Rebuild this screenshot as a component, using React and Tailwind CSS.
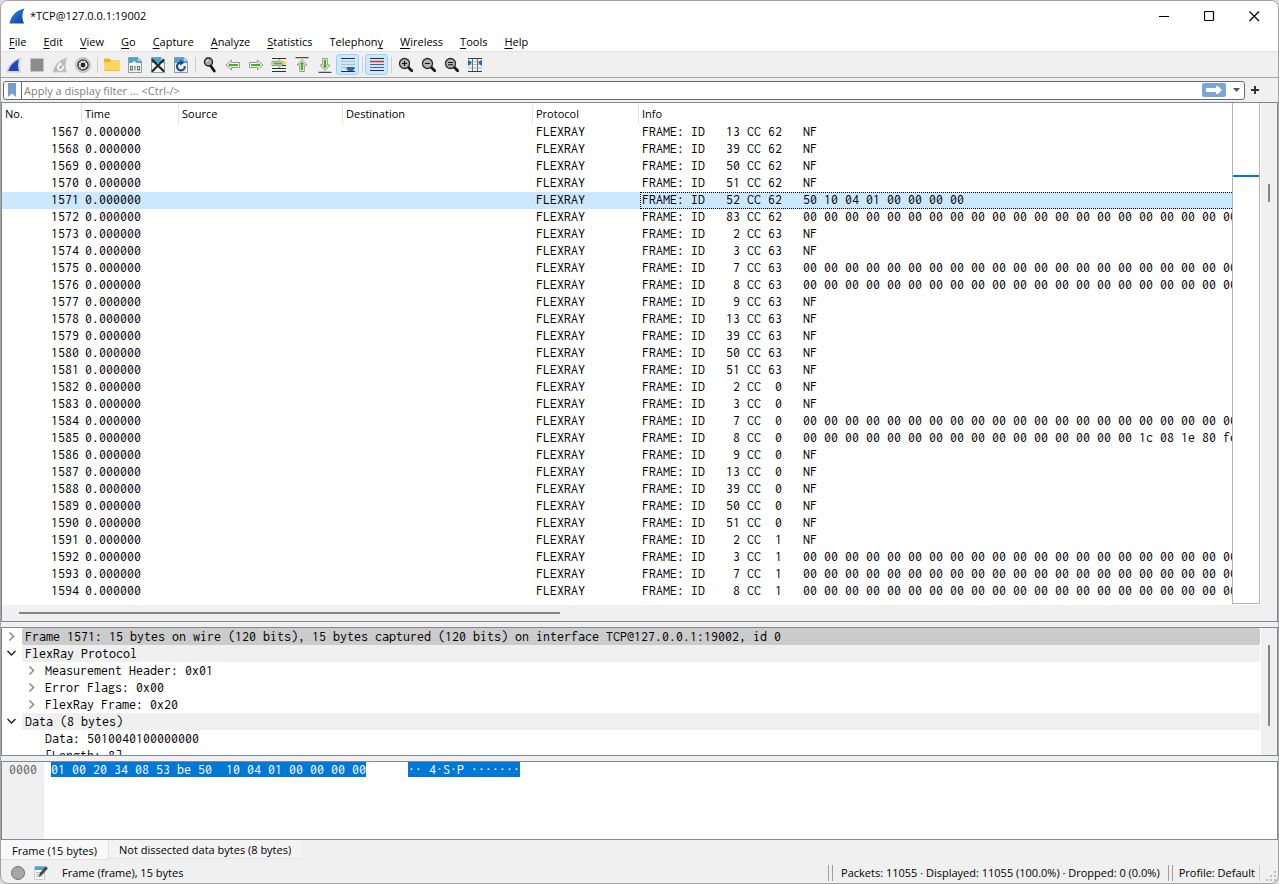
const ZEROS = Array(21).fill("00").join(" ");
const MIXED = Array(16).fill("00").join(" ") + " 1c 08 1e 80 fe";

const PACKETS = [
  [1567, 13, 62, "NF"],
  [1568, 39, 62, "NF"],
  [1569, 50, 62, "NF"],
  [1570, 51, 62, "NF"],
  [1571, 52, 62, "50 10 04 01 00 00 00 00"],
  [1572, 83, 62, ZEROS],
  [1573, 2, 63, "NF"],
  [1574, 3, 63, "NF"],
  [1575, 7, 63, ZEROS],
  [1576, 8, 63, ZEROS],
  [1577, 9, 63, "NF"],
  [1578, 13, 63, "NF"],
  [1579, 39, 63, "NF"],
  [1580, 50, 63, "NF"],
  [1581, 51, 63, "NF"],
  [1582, 2, 0, "NF"],
  [1583, 3, 0, "NF"],
  [1584, 7, 0, ZEROS],
  [1585, 8, 0, MIXED],
  [1586, 9, 0, "NF"],
  [1587, 13, 0, "NF"],
  [1588, 39, 0, "NF"],
  [1589, 50, 0, "NF"],
  [1590, 51, 0, "NF"],
  [1591, 2, 1, "NF"],
  [1592, 3, 1, ZEROS],
  [1593, 7, 1, ZEROS],
  [1594, 8, 1, ZEROS],
];

const SELECTED = 1571;

const MENUS = [
  ["", "F", "ile"],
  ["", "E", "dit"],
  ["", "V", "iew"],
  ["", "G", "o"],
  ["", "C", "apture"],
  ["", "A", "nalyze"],
  ["", "S", "tatistics"],
  ["Telephon", "y", ""],
  ["", "W", "ireless"],
  ["", "T", "ools"],
  ["", "H", "elp"],
];

const MONO = "font-['Inconsolata','Noto_Sans_Mono_CJK_JP',monospace] text-[14px] whitespace-pre";

function Svg({ children, className = "size-4" }) {
  return (
    <svg viewBox="0 0 16 16" className={className} aria-hidden="true">
      {children}
    </svg>
  );
}

function Fin({ from, to, id, className }) {
  return (
    <Svg className={className}>
      <defs>
        <linearGradient id={id} x1="0" y1="0" x2="1" y2="1">
          <stop offset="0" stopColor={from} />
          <stop offset="1" stopColor={to} />
        </linearGradient>
      </defs>
      <path d="M0.5 15.5C2 8.5 6 2.5 15.5 0.5C12.8 5 12.8 10.500 15 15.500Z" fill={`url(#${id})`} />
    </Svg>
  );
}

function StartIcon() {
  return (
    <Svg>
      <path d="M1 15C2.500 9 6 3 15 1C12.800 5 12.800 10.500 14.500 15Z" fill="#d9dbe2" stroke="#c2c4cc" strokeWidth="0.800" />
      <path d="M2.300 14C4 9 7.500 4.500 13 2.600C11.700 6 11.700 10 13 14Z" fill="#2444bd" />
    </Svg>
  );
}

function StopIcon() {
  return (
    <Svg>
      <rect x="1.500" y="1.500" width="13" height="13" fill="#8c8c8c" stroke="#c4c4c4" />
    </Svg>
  );
}

function RestartIcon() {
  return (
    <Svg>
      <path d="M1 15C2.500 9 6 3 15 1C12.800 5 12.800 10.500 14.500 15Z" fill="#b9b9b9" stroke="#cfcfcf" />
      <path d="M10.800 8.800a2.700 2.700 0 1 1-3-1.200" fill="none" stroke="#fff" strokeWidth="1.600" />
      <path d="M7 5.200l3.300 1.700L7.600 9.600z" fill="#fff" />
    </Svg>
  );
}

function OptionsIcon() {
  return (
    <Svg>
      <circle cx="8" cy="8" r="7.300" fill="#e4e4e4" stroke="#9a9a9a" strokeWidth="0.800" />
      <circle cx="8" cy="8" r="5.800" fill="#2c2c2c" />
      <circle cx="8" cy="8" r="3.600" fill="none" stroke="#f1f1f1" strokeWidth="1.800" strokeDasharray="2.100 0.730" />
      <circle cx="8" cy="8" r="3.100" fill="none" stroke="#f1f1f1" strokeWidth="1" />
      <circle cx="8" cy="8" r="1.700" fill="#2c2c2c" />
    </Svg>
  );
}

function FolderIcon() {
  return (
    <Svg>
      <path d="M0 2.500Q0 1.500 1 1.500H5.500L7 3.500H15Q16 3.500 16 4.500V8H0Z" fill="#f0b01e" />
      <path d="M0 6Q0 5 1 5H6.500L8 4H15Q16 4 16 5V13Q16 14 15 14H1Q0 14 0 13Z" fill="#ffd55f" />
      <path d="M0.500 13.500H15.500" stroke="#efb93a" />
    </Svg>
  );
}

function Sheet({ children }) {
  return (
    <Svg>
      <path d="M1.500 0.500H11L14.500 4V15.500H1.500Z" fill="#f3f4ec" stroke="#8f9ba3" />
      <path d="M2 1H11V3.500L14 4V6H2Z" fill="#4ba4dc" />
      <path d="M11 1V4H14Z" fill="#e9edf0" stroke="#9ba7ae" strokeWidth="0.600" />
      {children}
    </Svg>
  );
}

function SaveIcon() {
  return (
    <Sheet>
      <path d="M3.500 7C4 5.500 6 6 6.500 4.500C7.500 3.500 9 5 9.500 6L12.500 7Z" fill="#fff" />
      <g fill="none" stroke="#6f7374" strokeWidth="1">
        <rect x="3.500" y="9.500" width="2" height="3.500" />
        <path d="M8 9V13.500M7 9.500H8" />
        <rect x="10.500" y="9.500" width="2" height="3.500" />
      </g>
    </Sheet>
  );
}

function CloseFileIcon() {
  return (
    <Sheet>
      <path d="M2.500 3L13.500 14M13.500 3L2.500 14" stroke="#23282b" strokeWidth="2.200" strokeLinecap="round" />
    </Sheet>
  );
}

function ReloadIcon() {
  return (
    <Sheet>
      <path d="M11.800 9.200A3.900 3.900 0 1 1 7.500 5.600" fill="none" stroke="#1d4c8c" strokeWidth="2.200" />
      <path d="M7 2.600L11.500 5.700L7 8.600Z" fill="#1d4c8c" />
    </Sheet>
  );
}

function Magnifier({ children, small }) {
  return (
    <Svg>
      {small ? (
        <>
          <path d="M8.500 8.500L12.300 14" stroke="#161616" strokeWidth="2.800" strokeLinecap="round" />
          <circle cx="6.500" cy="5" r="4" fill="#a9a9a9" stroke="#1f1f1f" strokeWidth="1.400" />
          <path d="M4.500 5A2.200 2.200 0 0 1 6.800 2.800" fill="none" stroke="#eee" />
        </>
      ) : (
        <>
          <path d="M10 10L13.700 13.700" stroke="#161616" strokeWidth="2.800" strokeLinecap="round" />
          <circle cx="6.500" cy="6.500" r="5" fill="#b4b4b4" stroke="#2a2a2a" strokeWidth="1.300" />
        </>
      )}
      {children}
    </Svg>
  );
}

function Arrow({ rotate = 0 }) {
  return (
    <Svg>
      <g transform={`rotate(${rotate} 8 8)`}>
        <path d="M1 8L6.500 3V5.500H14.500V10.500H6.500V13Z" fill="#fff" stroke="#959595" strokeLinejoin="round" />
        <path d="M3 8L5.500 5.700V7H13V9H5.500V10.300Z" fill="#4db01c" />
      </g>
    </Svg>
  );
}

function GoToIcon() {
  return (
    <Svg>
      <path d="M1 1.500H15M1 11.500H15M1 14.500H15" stroke="#2b2f31" strokeWidth="1.200" />
      <path d="M9 8.500H15" stroke="#2b2f31" strokeWidth="1.200" />
      <rect x="11" y="3.500" width="4" height="4" fill="#ffe14a" />
      <path d="M13 6.500L8 2.500V4.500H1V8.500H8V10.500Z" fill="#fff" stroke="#959595" strokeLinejoin="round" />
      <path d="M11.500 6.500L8.700 4.400V5.500H2.300V7.500H8.700V8.600Z" fill="#4db01c" />
    </Svg>
  );
}

function EdgeArrow({ down }) {
  return (
    <Svg>
      <g transform={down ? "rotate(180 8 8)" : undefined}>
        <path d="M1.500 0.700H14.500" stroke="#4c4f50" strokeWidth="1.200" />
        <path d="M8 2.500L13 8H10.300V14.500H5.700V8H3Z" fill="#fff" stroke="#959595" strokeLinejoin="round" />
        <path d="M8 4.300L10.600 7.200H9.200V13.200H6.800V7.200H5.400Z" fill="#4db01c" />
      </g>
    </Svg>
  );
}

function AutoScrollIcon() {
  return (
    <Svg>
      <path d="M1 1.500H15M1 14.500H15" stroke="#2b2f31" strokeWidth="1.200" />
      <path d="M1 4.500H15M1 7.500H15M1 10.500H15" stroke="#b9bdb9" strokeWidth="1.100" />
      <path d="M6.500 10H14.500V12L12.500 14H8.500L6.500 12Z" fill="#2f66ad" />
    </Svg>
  );
}

function ColorizeIcon() {
  return (
    <Svg>
      <path d="M1 1.500H15" stroke="#2b2f31" strokeWidth="1.200" />
      <path d="M1 4.500H15" stroke="#e8262b" strokeWidth="1.300" />
      <path d="M1 7.500H15" stroke="#3068b5" strokeWidth="1.200" />
      <path d="M1 10.500H15" stroke="#7a4b84" strokeWidth="1.200" />
      <path d="M1 13.500H15" stroke="#2b2f31" strokeWidth="1.200" />
    </Svg>
  );
}

function ResizeIcon() {
  return (
    <Svg>
      <path d="M1 1.500H15M1 14.500H15" stroke="#3a3d3e" strokeWidth="1.200" />
      <path d="M1 4.500H15M1 7.500H15M1 11H15" stroke="#b9bdb9" />
      <path d="M5.500 2V14M10.500 2V14" stroke="#6e7374" />
      <path d="M1 2.500L5 5.800L1 9ZM15 2.500L11 5.800L15 9Z" fill="#2f66ad" />
    </Svg>
  );
}

const TOOLS = [
  ["Start capturing packets", <StartIcon />],
  ["Stop capturing packets", <StopIcon />],
  ["Restart current capture", <RestartIcon />],
  ["Capture options", <OptionsIcon />],
  null,
  ["Open a capture file", <FolderIcon />],
  ["Save this capture file", <SaveIcon />],
  ["Close this capture file", <CloseFileIcon />],
  ["Reload this file", <ReloadIcon />],
  null,
  ["Find a packet", <Magnifier small />],
  ["Go back", <Arrow />],
  ["Go forward", <Arrow rotate={180} />],
  ["Go to packet", <GoToIcon />],
  ["Go to first packet", <EdgeArrow />],
  ["Go to last packet", <EdgeArrow down />],
  ["Auto scroll", <AutoScrollIcon />, true],
  null,
  ["Colorize packets", <ColorizeIcon />, true],
  null,
  ["Zoom in", <Magnifier><path d="M4 6.500H9M6.500 4V9" stroke="#111" strokeWidth="1.200" /></Magnifier>],
  ["Zoom out", <Magnifier><path d="M4 6.500H9" stroke="#111" strokeWidth="1.200" /></Magnifier>],
  ["Normal size", <Magnifier><path d="M4 5.500H9M4 7.700H9" stroke="#111" strokeWidth="1.100" /></Magnifier>],
  ["Resize columns", <ResizeIcon />],
];

function TitleBar() {
  return (
    <header className="flex h-[30px] items-center bg-white pr-px pl-2">
      <Fin id="fin-title" from="#2d8af0" to="#0a3f9c" className="size-4" />
      <h1 className="ml-[5px] flex-1">*TCP@127.0.0.1:19002</h1>
      <button type="button" aria-label="Minimize" className="grid h-full w-[46px] place-items-center">
        <svg width="11" height="11" aria-hidden="true"><path d="M0 5.500H10" stroke="#000" /></svg>
      </button>
      <button type="button" aria-label="Maximize" className="grid h-full w-[45px] place-items-center">
        <svg width="11" height="11" aria-hidden="true"><rect x="0.500" y="0.500" width="9" height="9" rx="1" fill="none" stroke="#000" strokeWidth="1.200" /></svg>
      </button>
      <button type="button" aria-label="Close" className="grid h-full w-[45px] place-items-center">
        <svg width="11" height="11" aria-hidden="true"><path d="M0.500 0.500L10 10M10 0.500L0.500 10" stroke="#000" strokeWidth="1.200" /></svg>
      </button>
    </header>
  );
}

function MenuBar() {
  return (
    <nav className="flex h-5 items-center gap-px bg-white pt-[2px]">
      {MENUS.map(([before, key, after]) => (
        <button key={before + key + after} type="button" className="px-2">
          {before}
          <span className="underline underline-offset-2">{key}</span>
          {after}
        </button>
      ))}
    </nav>
  );
}

function ToolBar() {
  return (
    <div role="toolbar" aria-label="Main toolbar" className="flex h-[27px] items-center border-t border-b border-t-[#e3e3e3] border-b-[#a5a5a5] pl-px">
      {TOOLS.map((tool, i) =>
        tool ? (
          <button
            key={tool[0]}
            type="button"
            aria-label={tool[0]}
            aria-pressed={tool[2] ? true : undefined}
            className={
              tool[2]
                ? "grid h-[21px] w-[23px] place-items-center rounded-[3px] border border-[#99d1ff] bg-[#cce8ff]"
                : "grid h-[21px] w-[23px] place-items-center"
            }
          >
            {tool[1]}
          </button>
        ) : (
          <span key={i} className="mx-[2px] h-4 w-px border-r border-[#cfcfcf] pr-px" />
        )
      )}
    </div>
  );
}

function FilterBar() {
  return (
    <form className="flex h-6 items-center pr-[19px] pl-[2px]" onSubmit={(e) => e.preventDefault()}>
      <div className="flex h-[19px] flex-1 items-center rounded-[3px] border border-[#6b6b6b] bg-white">
        <button type="button" aria-label="Filter bookmarks" className="grid h-full w-[18px] place-items-center border-r border-[#6b6b6b] pr-px">
          <svg width="8" height="14" aria-hidden="true"><path d="M0 0H8V14L4 10.500L0 14Z" fill="#729fcf" /></svg>
        </button>
        <input
          type="text"
          aria-label="Display filter"
          placeholder="Apply a display filter ... <Ctrl-/>"
          className="h-full min-w-0 flex-1 bg-transparent pl-[2px] outline-none placeholder:text-[#808080]"
        />
        <button type="submit" aria-label="Apply filter" className="grid h-[14px] w-6 place-items-center rounded-[2px] bg-[#7ba5d6]">
          <svg width="16" height="8" aria-hidden="true"><path d="M0 2H10V0H12L16 4L12 8H10V6H0Z" fill="#fff" /></svg>
        </button>
        <button type="button" aria-label="Recent filters" className="grid h-full w-[18px] place-items-center pl-[2px]">
          <svg width="7" height="4" aria-hidden="true"><path d="M0 0H7L3.500 4Z" fill="#555" /></svg>
        </button>
      </div>
      <button type="button" aria-label="Add filter button" className="ml-[6px] grid h-full w-2 place-items-center">
        <svg width="8" height="8" aria-hidden="true"><path d="M4 0V8M0 4H8" stroke="#333" strokeWidth="2" /></svg>
      </button>
    </form>
  );
}

function PacketRow({ packet: [no, id, cc, data] }) {
  const selected = no === SELECTED;
  const info = `FRAME: ID ${String(id).padStart(4)} CC ${String(cc).padStart(2)}   ${data}`;
  return (
    <tr className={selected ? "bg-[#cce8ff]" : ""} aria-selected={selected}>
      <td className="h-[17px] pr-[3px] text-right">{no}</td>
      <td className="pl-[3px]">0.000000</td>
      <td />
      <td />
      <td className="pl-[3px]">FLEXRAY</td>
      <td className="overflow-hidden">
        {selected ? (
          <div className="ml-px h-[17px] border-y border-l border-dotted border-black pl-px leading-[13px]">{info}</div>
        ) : (
          <div className="h-[17px] pl-[3px]">{info}</div>
        )}
      </td>
    </tr>
  );
}

function PacketList() {
  const headings = ["No.", "Time", "Source", "Destination", "Protocol", "Info"];
  return (
    <section aria-label="Packet list" className="border border-[#828790]">
      <div className="flex bg-white">
        <div className="min-w-0 flex-1 overflow-hidden pb-[5px]">
          <table className="w-full table-fixed border-separate border-spacing-0">
            <colgroup>
              <col className="w-[80px]" />
              <col className="w-[97px]" />
              <col className="w-[164px]" />
              <col className="w-[190px]" />
              <col className="w-[106px]" />
              <col />
            </colgroup>
            <thead>
              <tr>
                {headings.map((h, i) => (
                  <th
                    key={h}
                    scope="col"
                    className={
                      i < 5
                        ? "h-[21px] border-r border-[#e5e5e5] pl-[3px] text-left font-normal"
                        : "h-[21px] pl-[3px] text-left font-normal"
                    }
                  >
                    {h}
                  </th>
                ))}
              </tr>
            </thead>
            <tbody className={`align-top leading-[15px] ${MONO}`}>
              {PACKETS.map((p) => (
                <PacketRow key={p[0]} packet={p} />
              ))}
            </tbody>
          </table>
        </div>
        <div className="relative mr-px mb-px w-7 border-r border-b border-l border-[#b4b4b4] bg-white">
          <span className="absolute inset-x-0 top-[72px] h-[2px] bg-[#0078d7]" />
        </div>
        <div className="w-4 bg-[#f0f0f0] pt-[81px]">
          <div className="mx-auto h-[18px] w-[2px] bg-[#858585]" />
        </div>
      </div>
      <div className="flex h-4 items-center bg-[#f0f0f0] pl-[17px]">
        <div className="h-[2px] w-[43%] bg-[#858585]" />
      </div>
    </section>
  );
}

function Chevron({ open }) {
  return (
    <svg width="9" height="9" viewBox="0 0 9 9" aria-hidden="true" fill="none" strokeWidth="1.500">
      {open ? <path d="M0.500 2L4.500 6L8.500 2" stroke="#222" /> : <path d="M2.500 0.500L6.500 4.500L2.500 8.500" stroke="#8a8a8a" />}
    </svg>
  );
}

function Branch({ label, level = 0, open, leaf, tone = "" }) {
  return (
    <li role="treeitem" aria-expanded={leaf ? undefined : !!open} className={level ? "flex h-[17px] pl-5" : "flex h-[17px]"}>
      {leaf ? (
        <span className="w-5" />
      ) : (
        <button type="button" aria-label={`Toggle ${label}`} className="grid w-5 place-items-center pr-[2px]">
          <Chevron open={open} />
        </button>
      )}
      <span className={`flex-1 overflow-hidden pl-[3px] ${tone}`}>{label}</span>
    </li>
  );
}

function PacketDetails() {
  return (
    <section aria-label="Packet details" className="mt-[5px] flex h-[129px] overflow-hidden border border-[#828790] bg-white">
      <ul role="tree" className={`min-w-0 flex-1 pr-px leading-[17px] ${MONO}`}>
        <Branch label="Frame 1571: 15 bytes on wire (120 bits), 15 bytes captured (120 bits) on interface TCP@127.0.0.1:19002, id 0" tone="bg-[#cbcbcb] rounded-[2px]" />
        <Branch label="FlexRay Protocol" open tone="bg-[#f0f0f0]" />
        <Branch label="Measurement Header: 0x01" level={1} />
        <Branch label="Error Flags: 0x00" level={1} />
        <Branch label="FlexRay Frame: 0x20" level={1} />
        <Branch label="Data (8 bytes)" open tone="bg-[#f0f0f0]" />
        <Branch label="Data: 5010040100000000" level={1} leaf />
        <Branch label="[Length: 8]" level={1} leaf />
      </ul>
      <div className="w-4 bg-[#f0f0f0] pt-[17px]">
        <div className="mx-auto h-[81px] w-[2px] bg-[#858585]" />
      </div>
    </section>
  );
}

function PacketBytes() {
  return (
    <section aria-label="Packet bytes" className={`mt-[5px] flex min-h-[79px] flex-1 border border-[#828790] bg-white leading-[15px] ${MONO}`}>
      <div className="w-[42px] bg-[#f0f0f0] pl-[7px] text-[#666]">0000</div>
      <div className="flex items-start gap-[42px] pl-[7px] text-white">
        <span className="bg-[#0078d7]">01 00 20 34 08 53 be 50  10 04 01 00 00 00 00</span>
        <span className="bg-[#0078d7]">·· 4·S·P ·······</span>
      </div>
    </section>
  );
}

function ByteTabs() {
  return (
    <div role="tablist" className="flex h-[21px] items-start">
      <button type="button" role="tab" aria-selected="true" className="h-5 border-r border-b border-[#e0e0e0] bg-[#f9f9f9] pt-[2px] pr-[11px] pl-[11px]">
        Frame (15 bytes)
      </button>
      <button type="button" role="tab" aria-selected="false" className="h-[19px] border-b border-[#e6e6e6] bg-[#f3f3f3] px-[10px] pt-px">
        Not dissected data bytes (8 bytes)
      </button>
    </div>
  );
}

function DoubleBar() {
  return <span className="h-4 w-[5px] border-x border-[#a0a0a0]" />;
}

function StatusBar() {
  return (
    <footer className="flex h-[22px] items-center pt-px pl-[9px]">
      <button type="button" aria-label="Expert information">
        <svg width="16" height="16" aria-hidden="true"><circle cx="8" cy="8" r="6.500" fill="#a6a8a4" stroke="#6f716e" /></svg>
      </button>
      <button type="button" aria-label="Capture file comments" className="ml-[7px]">
        <Svg>
          <path d="M1.500 1.500H11.500V14.500H1.500Z" fill="#fafafa" stroke="#c9cdd0" />
          <path d="M2 1.500H11V5H2Z" fill="#4ba4dc" />
          <path d="M3 7.500H8M3 9.500H6M3 11.500H9" stroke="#b8bcbf" />
          <path d="M12.600 1.600L7.200 8.200L6.200 11.200L9 9.800L14.600 3.300Z" fill="#4a4d4e" stroke="#2d2f30" strokeWidth="0.600" />
        </Svg>
      </button>
      <span className="ml-[13px] flex-1">Frame (frame), 15 bytes</span>
      <DoubleBar />
      <span className="px-2">Packets: 11055 · Displayed: 11055 (100.0%) · Dropped: 0 (0.0%)</span>
      <DoubleBar />
      <button type="button" className="ml-[6px]">Profile: Default</button>
      <span className="ml-1 h-4 w-px bg-[#d0d0d0]" />
      <svg width="11" height="11" className="mt-2 mr-px ml-[6px]" aria-hidden="true" fill="#bdbdbd">
        <path d="M8 0h2v2h-2zM4 4h2v2h-2zM8 4h2v2h-2zM0 8h2v2h-2zM4 8h2v2h-2zM8 8h2v2h-2z" />
      </svg>
    </footer>
  );
}

export default function App() {
  return (
    <div className="min-h-screen bg-[#dcdcdc]">
      <div className="flex min-h-screen flex-col overflow-hidden rounded-lg border border-[#a3a3a3] bg-[#f0f0f0] font-['Open_Sans',sans-serif] text-[11px] leading-4 text-black">
        <TitleBar />
        <MenuBar />
        <ToolBar />
        <FilterBar />
        <main className="flex flex-1 flex-col">
          <PacketList />
          <PacketDetails />
          <PacketBytes />
          <ByteTabs />
        </main>
        <StatusBar />
      </div>
    </div>
  );
}
